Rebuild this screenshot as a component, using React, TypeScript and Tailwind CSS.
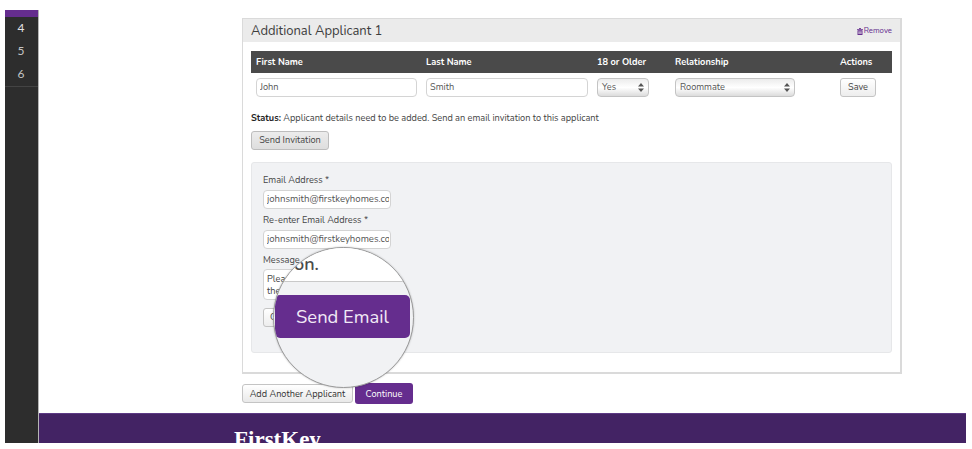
import React from "react";

const font = { fontFamily: '"Nunito", "Lato", "Noto Sans", sans-serif' };

function Chevrons() {
  return (
    <svg width="6" height="9" viewBox="0 0 6 9" className="shrink-0">
      <path d="M3 0 L6 3.5 H0 Z M0 5.5 H6 L3 9 Z" fill="#555" />
    </svg>
  );
}

function Select({ label, className }: { label: string; className: string }) {
  return (
    <div className={`flex h-[19px] items-center justify-between rounded-[4px] border border-[#c4c4c4] bg-gradient-to-b from-[#ececec] via-[#ffffff] to-[#dcdcdc] pl-[4px] pr-[4px] text-[9.2px] text-[#555] ${className}`}>
      <span>{label}</span>
      <Chevrons />
    </div>
  );
}

function TextBox({ value, className }: { value: string; className: string }) {
  return (
    <div className={`overflow-hidden rounded-[4px] border border-[#d4d4d4] bg-white pr-[1px] ${className}`}>
      <div className="flex h-[17px] items-center overflow-hidden whitespace-nowrap text-[#555]">{value}</div>
    </div>
  );
}

export default function App() {
  return (
    <div style={font} className="relative flex h-[449px] w-[972px] overflow-hidden bg-white pb-[6px] pl-[5px] pr-[6px] pt-[10px] text-[#333]">
      <aside className="flex w-[34px] shrink-0 flex-col border-r border-[#b5b5b5] bg-[#2d2d2d] text-[#c4c4c4]">
        <div className="h-[7px] bg-[#652d8e]" />
        <div className="-mt-[1px] flex h-[71px] flex-col items-center border-b border-[#444] pr-[1px] text-[12px] leading-[23px]" style={{ fontFamily: '"Lato", sans-serif' }}>
          <span className="text-[#e2e2e2]">4</span>
          <span>5</span>
          <span>6</span>
        </div>
      </aside>

      <div className="flex min-w-0 flex-1 flex-col">
        <main className="flex-1 pl-[203px] pt-[8px]">
          <section className="h-[356px] w-[660px] border border-[#dadada] border-b-2 border-r-2 bg-white">
            <header className="flex h-[23px] items-center justify-between bg-[#ebebeb] pl-[8px] pr-[8px]">
              <h2 className="pt-[2px] text-[13px] text-[#3d3d3d]">Additional Applicant 1</h2>
              <span className="flex items-center gap-[1px] pt-[1px] text-[7.8px] text-[#652d8e]">
                <svg width="6" height="7" viewBox="0 0 7 8" fill="#652d8e">
                  <path d="M2.5 0h2v1H7v1H0V1h2.5zM.6 2.6h5.8V8H.6zM1.8 3.6v3.4h.8V3.6zM3.1 3.6v3.4h.8V3.6zM4.4 3.6v3.4h.8V3.6z" fillRule="evenodd" />
                </svg>
                Remove
              </span>
            </header>

            <div className="px-[8px] pt-[9px]">
              <div className="grid h-[22px] grid-cols-[170px_171px_78px_165px_1fr] items-center bg-[#4a4a4a] pl-[5px] pt-[1px] text-[9.2px] font-bold text-white">
                <span>First Name</span>
                <span>Last Name</span>
                <span>18 or Older</span>
                <span>Relationship</span>
                <span>Actions</span>
              </div>
              <div className="mt-[5px] flex items-start text-[9.2px]">
                <TextBox value="John" className="ml-[5px] w-[161px] pl-[3px]" />
                <TextBox value="Smith" className="ml-[9px] w-[162px] pl-[3px]" />
                <Select label="Yes" className="ml-[9px] w-[52px]" />
                <Select label="Roommate" className="ml-[26px] w-[120px]" />
                <button className="ml-[45px] h-[19px] w-[36px] rounded-[3px] border border-[#c4c4c4] bg-gradient-to-b from-white to-[#ededed] text-[#444]">Save</button>
              </div>

              <p className="mt-[15px] text-[9.2px] leading-[13px] text-[#444]">
                <strong className="text-[#222]">Status:</strong> Applicant details need to be added. Send an email invitation to this applicant
              </p>
              <button className="mt-[6px] h-[19px] w-[78px] rounded-[3px] border border-[#bdbdbd] bg-gradient-to-b from-[#ececec] to-[#dedede] text-[9.2px] text-[#444]">Send Invitation</button>

              <div className="mt-[12px] h-[191px] w-[641px] rounded-[3px] border border-[#e6e7e9] bg-[#f1f2f4] pl-[11px] pt-[11px] text-[9.2px] text-[#444]">
                <label className="block leading-[13px]">Email Address *</label>
                <div className="text-[9.6px]">
                  <TextBox value="johnsmith@firstkeyhomes.com" className="mt-[3px] w-[128px] pl-[3px]" />
                </div>
                <label className="mt-[5px] block leading-[13px]">Re-enter Email Address *</label>
                <div className="text-[9.6px]">
                  <TextBox value="johnsmith@firstkeyhomes.com" className="mt-[3px] w-[128px] pl-[3px]" />
                </div>
                <label className="mt-[5px] block leading-[13px]">Message</label>
                <div className="mt-[2px] h-[31px] w-[128px] rounded-[4px] border border-[#d4d4d4] bg-white pl-[3px] pt-[3px] leading-[12px]">
                  Please<br />the
                </div>
                <button className="mt-[8px] h-[19px] w-[50px] rounded-[3px] border border-[#c4c4c4] bg-gradient-to-b from-white to-[#ededed] pl-[6px] text-left">Cancel</button>
              </div>
            </div>
          </section>

          <div className="mt-[9px] flex items-center gap-[2px]">
            <button className="h-[19px] w-[111px] rounded-[3px] border border-[#c4c4c4] bg-gradient-to-b from-white to-[#e9e9e9] pt-[2px] text-[9.2px] text-[#333]">Add Another Applicant</button>
            <button className="h-[21px] w-[58px] rounded-[3px] bg-[#652d8e] pt-[2px] text-[9.2px] text-white">Continue</button>
          </div>
        </main>

        <footer className="h-[30px] overflow-hidden border-t border-[#5d3a85] bg-[#432364] pl-[195px] pt-[12px]">
          <span className="block text-[23px] font-bold leading-[28px] text-white" style={{ fontFamily: '"Liberation Serif", serif' }}>FirstKey</span>
        </footer>
      </div>

      <div className="absolute left-[273px] top-[247px] h-[141px] w-[141px] overflow-hidden rounded-full border border-[#9a9a9a] bg-[#f1f2f4] shadow-[0_0_2px_rgba(0,0,0,0.25)]">
        <div className="h-[33px] bg-white pl-[20px] pt-[6px] text-[18px] font-semibold leading-[20px] text-[#4a4a4a]">on.</div>
        <div className="h-[1px] bg-[#c9c9c9]" />
        <div className="ml-[1px] mt-[13px] flex h-[43px] w-[135px] items-center justify-center rounded-[5px] bg-[#652d8e] pt-[1px] text-[18.4px] text-[#f1e9f6]">Send Email</div>
      </div>
    </div>
  );
}
